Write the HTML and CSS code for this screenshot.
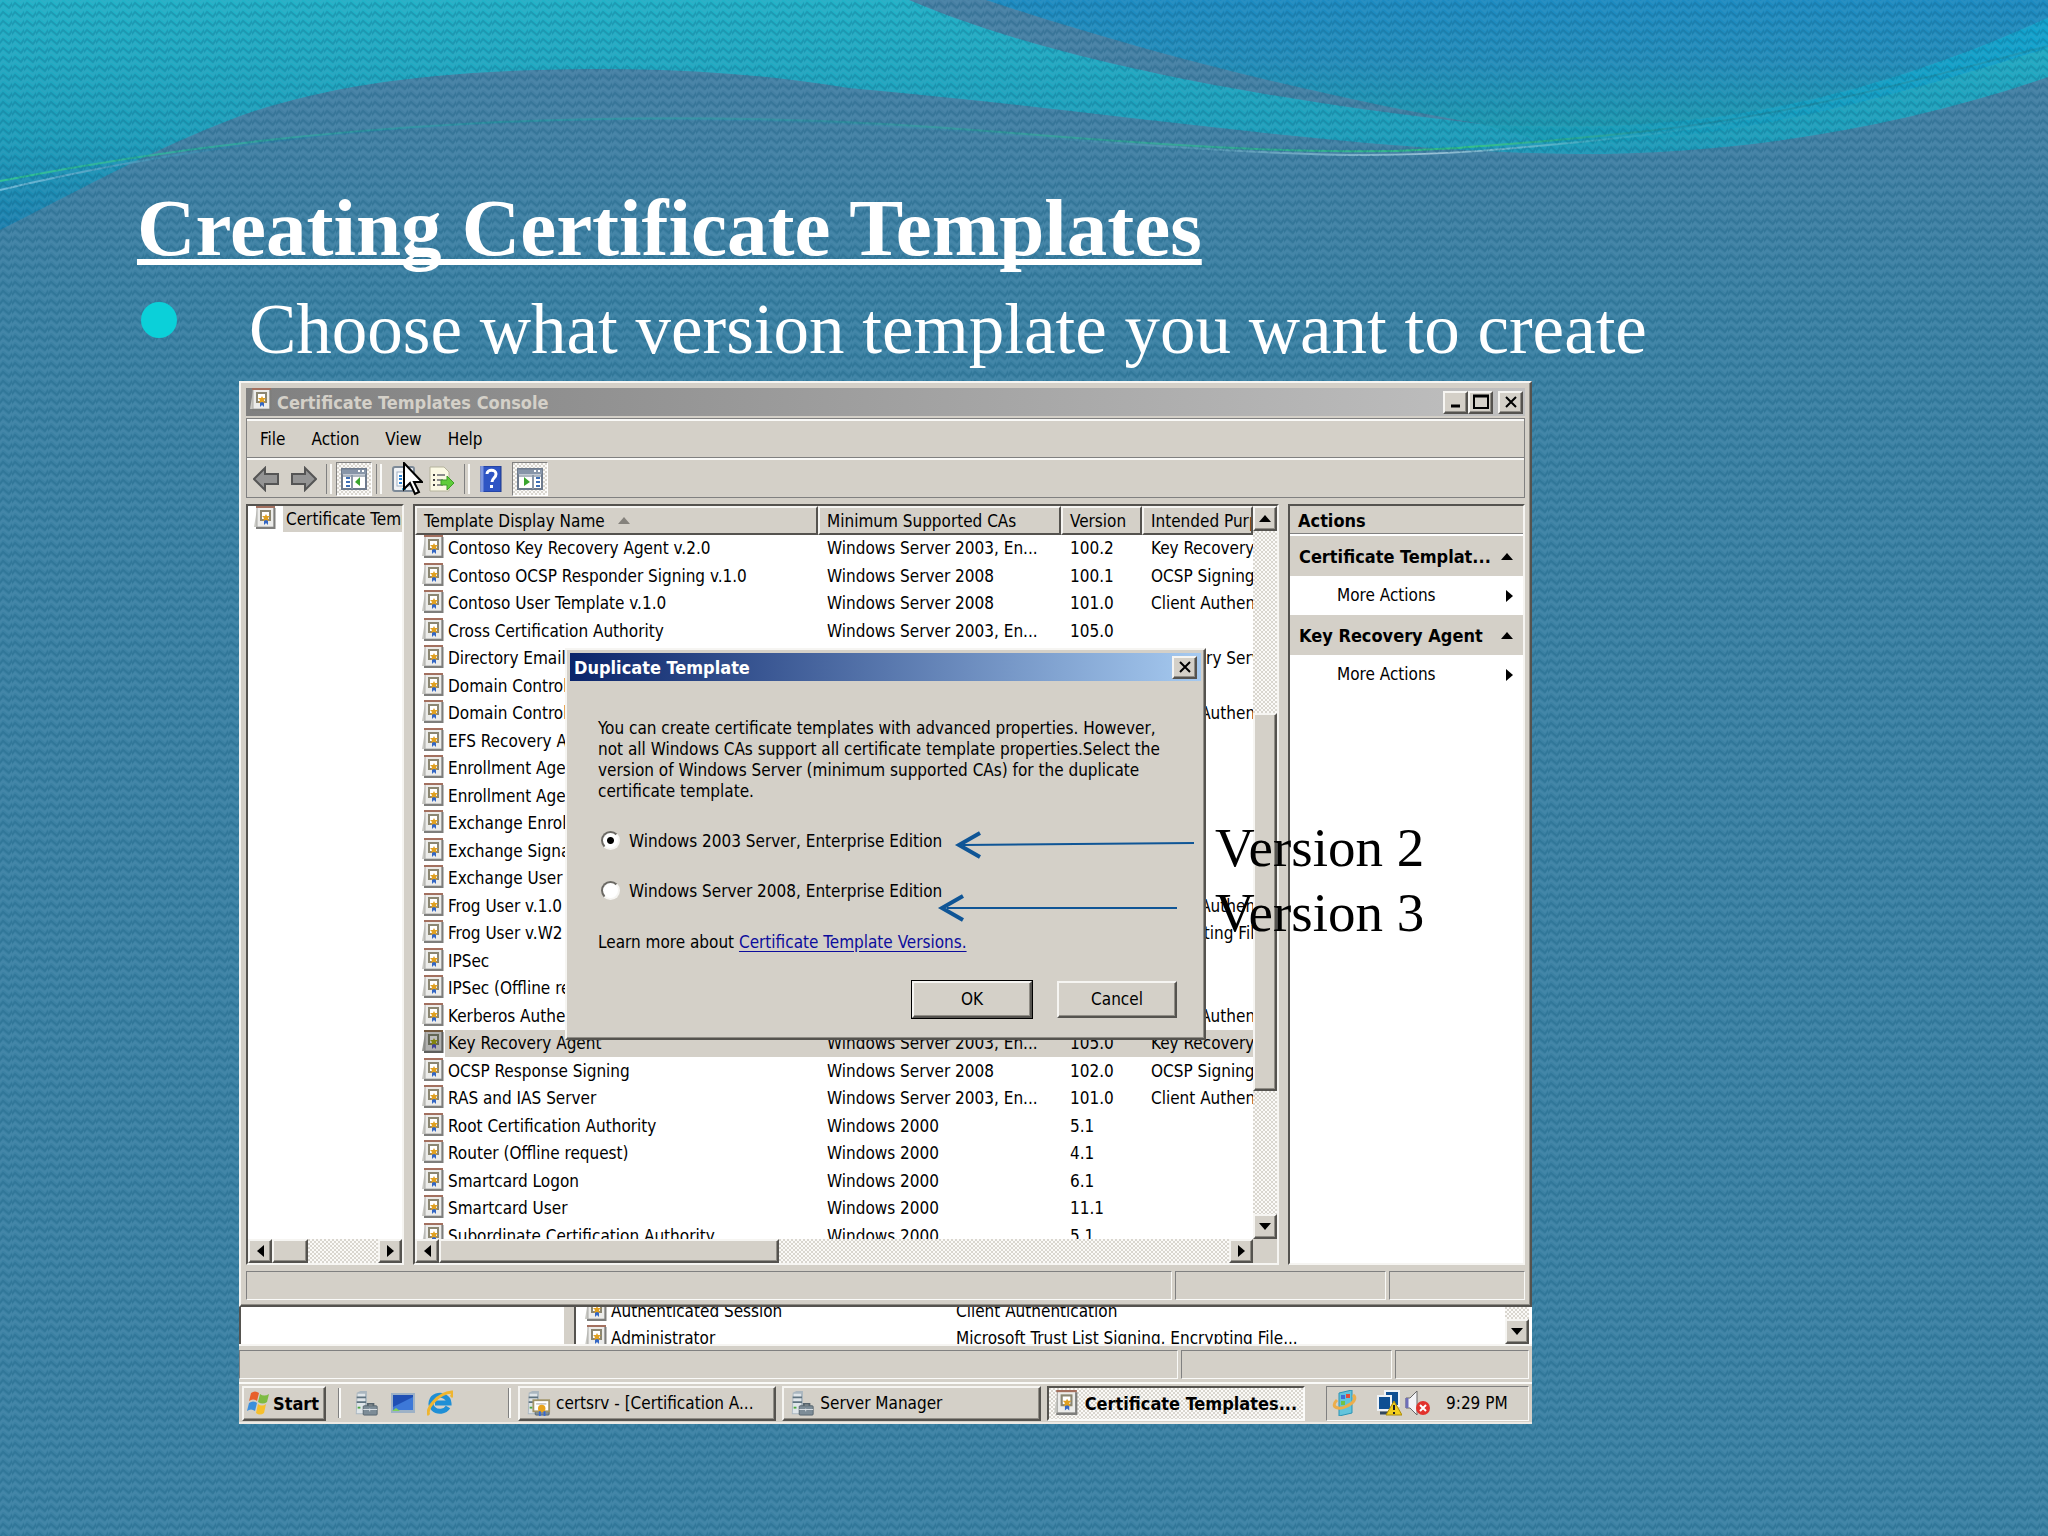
FILE: index.html
```html
<!DOCTYPE html>
<html lang="en">
<head>
<meta charset="utf-8">
<title>Creating Certificate Templates</title>
<link rel="stylesheet" href="styles.css">
</head>
<body>
<svg class="defs" aria-hidden="true">
  <symbol id="cert" viewBox="0 0 22 24">
    <path d="M3 3L0 21H4Z" fill="#c9c9c4"/>
    <rect x="3" y="1" width="17" height="20" fill="#ececea" stroke="#a9a9a6"/>
    <path d="M20.5 2V22H2" fill="none" stroke="#7e7e7c" stroke-width="2"/>
    <rect x="2" y="0" width="19" height="2" fill="#a3705f"/>
    <rect x="7" y="5" width="9" height="9" fill="#fff" stroke="#8b8672" stroke-width="2"/>
    <path d="M10 14v5l2-2 2 2v-5z" fill="#3467c4"/>
    <path d="M12 8l1 2 3 0-2 2 1 3-3-1-3 1 1-3-2-2 3 0z" fill="#e0a020"/>
  </symbol>
  <symbol id="server" viewBox="0 0 26 28">
    <path d="M3 3L7 1H14V23L11 26H2Z" fill="#aab6bf"/>
    <path d="M4 4H12V25H3Z" fill="#dfe5e9"/>
    <path d="M3 8H13M3 13H13" stroke="#5f7380" stroke-width="2"/>
    <path d="M4 19h3" stroke="#4aa83d" stroke-width="2"/>
    <path d="M15 18v-3h6v3" fill="none" stroke="#56636c" stroke-width="2"/>
    <rect x="10" y="17" width="15" height="10" rx="1" fill="#7d8c97" stroke="#55636d"/>
    <path d="M10 21H25M17 20v3" stroke="#dde3e7" stroke-width="1"/>
  </symbol>
  <symbol id="up" viewBox="0 0 12 7"><path d="M0 7L6 0L12 7Z"/></symbol>
  <symbol id="down" viewBox="0 0 12 7"><path d="M0 0H12L6 7Z"/></symbol>
  <symbol id="left" viewBox="0 0 7 12"><path d="M7 0V12L0 6Z"/></symbol>
  <symbol id="right" viewBox="0 0 7 12"><path d="M0 0V12L7 6Z"/></symbol>
  <symbol id="cross" viewBox="0 0 12 12"><path d="M1 1L11 11M11 1L1 11" stroke="#000" stroke-width="2" fill="none"/></symbol>
  <symbol id="arrow" viewBox="0 0 26 24"><path d="M1 12L12 1V7H25V17H12V23Z" fill="#949494" stroke="#555" stroke-width="2"/></symbol>
  <symbol id="console" viewBox="0 0 26 22">
    <rect x="1" y="1" width="24" height="20" fill="#fff" stroke="#6d7a8c" stroke-width="2"/>
    <path d="M1 4H25" stroke="#8795a8" stroke-width="5"/>
    <path d="M17 3h2M21 3h2" stroke="#fff" stroke-width="2"/>
    <path d="M2 8H24" stroke="#aeb6c0" stroke-width="2"/>
  </symbol>
</svg>

<main class="slide">
  <svg class="texture" aria-hidden="true">
    <defs>
      <pattern id="weave" width="12" height="9" patternUnits="userSpaceOnUse">
        <path d="M-1 8L3 3L9 8L13 2" fill="none" stroke="#14587a" stroke-opacity=".26" stroke-width="2"/>
        <path d="M-1 3L3 -2L9 3L13 -3M-1 12L3 7L9 12L13 6" fill="none" stroke="#6aa0c0" stroke-opacity=".16" stroke-width="2"/>
      </pattern>
    </defs>
    <rect width="100%" height="100%" fill="url(#weave)"/>
  </svg>
  <svg class="waves" viewBox="0 0 2048 240" preserveAspectRatio="none" aria-hidden="true">
    <defs>
      <linearGradient id="teal" x1="0" y1="0" x2="0" y2="1"><stop offset="0" stop-color="#21b3c8"/><stop offset=".6" stop-color="#1c9fbb"/><stop offset="1" stop-color="#1b7fae"/></linearGradient>
      <linearGradient id="blue" x1="0" y1="0" x2="0" y2="1"><stop offset="0" stop-color="#1c8bc2"/><stop offset=".5" stop-color="#228dba"/><stop offset="1" stop-color="#1c9ab0"/></linearGradient>
      <linearGradient id="cyan" x1="0" y1="0" x2="1" y2="0"><stop offset="0" stop-color="#179bb2"/><stop offset="1" stop-color="#10a3ce"/></linearGradient>
      <linearGradient id="green" gradientUnits="userSpaceOnUse" x1="0" y1="0" x2="2048" y2="0"><stop offset="0" stop-color="#2cc493"/><stop offset=".2" stop-color="#2a9aa0" stop-opacity=".7"/><stop offset=".4" stop-color="#2a9aa0" stop-opacity=".6"/><stop offset=".72" stop-color="#30c285"/><stop offset=".82" stop-color="#188fa8"/><stop offset="1" stop-color="#188fa8" stop-opacity=".6"/></linearGradient>
      <linearGradient id="pale" gradientUnits="userSpaceOnUse" x1="0" y1="0" x2="2048" y2="0"><stop offset="0" stop-color="#74c0dc"/><stop offset=".12" stop-color="#2a7fa6" stop-opacity=".7"/><stop offset=".5" stop-color="#3a8fae" stop-opacity=".4"/><stop offset=".7" stop-color="#9cc4d8"/><stop offset=".8" stop-color="#6fc6d4" stop-opacity=".2"/><stop offset="1" stop-color="#188fa8" stop-opacity="0"/></linearGradient>
    </defs>
    <path fill="url(#teal)" d="M0 0H909C1010 43 1180 90 1481 124C1700 130 1870 84 2048 18V77C1900 128 1740 154 1579 154C1351 152 1120 112 849 88C750 72 670 69 588 69C440 70 330 84 240 116C150 150 80 190 0 230Z"/>
    <path fill="url(#blue)" d="M986 0H2048V18C1870 98 1700 138 1481 124C1340 100 1160 58 986 0Z"/>
    <path fill="url(#cyan)" d="M1481 124C1700 138 1870 98 2048 18V48C1880 100 1760 136 1560 146Z"/>
    <path fill="none" stroke="url(#pale)" stroke-width="2" d="M0 190C300 118 640 104 1000 134S1420 158 1600 140S1900 84 2048 46"/>
    <path fill="none" stroke="url(#green)" stroke-width="2" d="M0 181C300 122 640 102 1000 132S1420 152 1600 136S1900 84 2048 46"/>
  </svg>

  <div class="copy">
    <h1>Creating Certificate Templates</h1>
    <ul><li>Choose what version template you want to create</li></ul>
  </div>

  <section class="desktop">
    <div class="window bevel">
      <header class="title inactive">
        <svg class="i22"><use href="#cert"/></svg>
        <span>Certificate Templates Console</span>
        <div class="caption">
          <button class="cap bevel" aria-label="Minimize"><svg class="i12" viewBox="0 0 12 12"><path d="M1 10H10" stroke="#000" stroke-width="3"/></svg></button>
          <button class="cap bevel" aria-label="Maximize"><svg class="i16" viewBox="0 0 16 16"><path d="M1 2H15V14H1Z" fill="none" stroke="#000" stroke-width="2"/><path d="M0 2H16" stroke="#000" stroke-width="3"/></svg></button>
          <button class="cap bevel apart" aria-label="Close"><svg class="i12"><use href="#cross"/></svg></button>
        </div>
      </header>
      <div class="bars">
        <nav class="menu"><button>File</button><button>Action</button><button>View</button><button>Help</button></nav>
        <div class="toolbar">
          <button aria-label="Back"><svg class="i26"><use href="#arrow"/></svg></button>
          <button aria-label="Forward"><svg class="i26 flip"><use href="#arrow"/></svg></button>
          <i class="sep"></i>
          <button class="pressed" aria-label="Console tree"><svg class="i26"><use href="#console"/><path d="M5 12h4M5 16h4M5 20h4" stroke="#3f6fb5" stroke-width="2"/><path d="M11 9v14" stroke="#8a97a8" stroke-width="2"/><path d="M19 11v9l-5-4z" fill="#3aa52e"/></svg></button>
          <i class="sep"></i>
          <button aria-label="Properties"><svg class="i26" viewBox="0 0 26 26"><rect x="2" y="1" width="21" height="24" rx="2" fill="#f1f3f6" stroke="#7d8a98" stroke-width="2"/><rect x="6" y="6" width="13" height="14" fill="#fff" stroke="#9fb0c4"/><path d="M8 10h3M8 13h3M8 17h3" stroke="#2b83d6" stroke-width="2"/><path d="M12 10h5M12 13h5M11 23h4" stroke="#37a9e0" stroke-width="2"/></svg></button>
          <button aria-label="Export list"><svg class="i26" viewBox="0 0 26 26"><path d="M1 1H15L20 6V25H1Z" fill="#fbf9e4" stroke="#b5b39c"/><path d="M4 9h2M4 14h2M4 19h2" stroke="#444" stroke-width="2"/><path d="M8 9h8M8 14h6M8 19h6" stroke="#8d8d8d" stroke-width="2"/><path d="M12 14h6v-4l7 7-7 7v-5h-6z" fill="#5fcc3a" stroke="#3c9c26"/></svg></button>
          <i class="sep"></i>
          <button aria-label="Help"><svg class="i26" viewBox="0 0 26 26"><rect x="2" y="0" width="20" height="26" fill="#2f55c4" stroke="#1d3789"/><path d="M3 0v26" stroke="#7e97e0" stroke-width="3"/><path d="M8 8c0-5 9-5 9 0c0 4-4 4-4 8" fill="none" stroke="#fff" stroke-width="3"/><rect x="11" y="19" width="3" height="3" fill="#fff"/></svg></button>
          <button class="pressed" aria-label="Action pane"><svg class="i26"><use href="#console"/><path d="M19 12h4M19 16h4M19 20h4" stroke="#3f6fb5" stroke-width="2"/><path d="M16 9v14" stroke="#8a97a8" stroke-width="2"/><path d="M7 11v9l6-4z" fill="#3aa52e"/></svg></button>
          <svg class="pointer" viewBox="0 0 20 34" aria-hidden="true"><path d="M1 1V27L7 21L12 32L16 30L11 20H19Z" fill="#fff" stroke="#000" stroke-width="2"/></svg>
        </div>
      </div>

      <div class="panes">
        <div class="pane tree">
          <div class="node"><svg class="i22"><use href="#cert"/></svg><span>Certificate Templates</span></div>
          <div class="hscroll"><button class="sb bevel" aria-label="Left"><svg class="tv"><use href="#left"/></svg></button><i class="thumb bevel small"></i><i class="track"></i><button class="sb bevel" aria-label="Right"><svg class="tv"><use href="#right"/></svg></button></div>
        </div>
        <div class="pane list">
          <div class="rows">
            <table>
              <colgroup><col class="c1"><col class="c2"><col class="c3"><col></colgroup>
              <thead><tr><th>Template Display Name <svg class="th sort"><use href="#up"/></svg></th><th>Minimum Supported CAs</th><th>Version</th><th>Intended Purposes</th></tr></thead>
              <tbody>
                <tr><td><svg class="i22"><use href="#cert"/></svg>Contoso Key Recovery Agent v.2.0</td><td>Windows Server 2003, En...</td><td>100.2</td><td>Key Recovery Agent</td></tr>
                <tr><td><svg class="i22"><use href="#cert"/></svg>Contoso OCSP Responder Signing v.1.0</td><td>Windows Server 2008</td><td>100.1</td><td>OCSP Signing</td></tr>
                <tr><td><svg class="i22"><use href="#cert"/></svg>Contoso User Template v.1.0</td><td>Windows Server 2008</td><td>101.0</td><td>Client Authentication</td></tr>
                <tr><td><svg class="i22"><use href="#cert"/></svg>Cross Certification Authority</td><td>Windows Server 2003, En...</td><td>105.0</td><td></td></tr>
                <tr><td><svg class="i22"><use href="#cert"/></svg>Directory Email</td><td></td><td></td><td>Directory Service</td></tr>
                <tr><td><svg class="i22"><use href="#cert"/></svg>Domain Controller</td><td></td><td></td><td></td></tr>
                <tr><td><svg class="i22"><use href="#cert"/></svg>Domain Controller</td><td></td><td></td><td>Client Authentication</td></tr>
                <tr><td><svg class="i22"><use href="#cert"/></svg>EFS Recovery Agent</td><td></td><td></td><td></td></tr>
                <tr><td><svg class="i22"><use href="#cert"/></svg>Enrollment Agent</td><td></td><td></td><td></td></tr>
                <tr><td><svg class="i22"><use href="#cert"/></svg>Enrollment Agent</td><td></td><td></td><td></td></tr>
                <tr><td><svg class="i22"><use href="#cert"/></svg>Exchange Enrollment</td><td></td><td></td><td></td></tr>
                <tr><td><svg class="i22"><use href="#cert"/></svg>Exchange Signature</td><td></td><td></td><td></td></tr>
                <tr><td><svg class="i22"><use href="#cert"/></svg>Exchange User</td><td></td><td></td><td></td></tr>
                <tr><td><svg class="i22"><use href="#cert"/></svg>Frog User v.1.0</td><td></td><td></td><td>Client Authentication</td></tr>
                <tr><td><svg class="i22"><use href="#cert"/></svg>Frog User v.W2</td><td></td><td></td><td>Encrypting File</td></tr>
                <tr><td><svg class="i22"><use href="#cert"/></svg>IPSec</td><td></td><td></td><td></td></tr>
                <tr><td><svg class="i22"><use href="#cert"/></svg>IPSec (Offline request)</td><td></td><td></td><td></td></tr>
                <tr><td><svg class="i22"><use href="#cert"/></svg>Kerberos Authentication</td><td></td><td></td><td>Client Authentication</td></tr>
                <tr class="selected"><td><svg class="i22"><use href="#cert"/></svg>Key Recovery Agent</td><td>Windows Server 2003, En...</td><td>105.0</td><td>Key Recovery Agent</td></tr>
                <tr><td><svg class="i22"><use href="#cert"/></svg>OCSP Response Signing</td><td>Windows Server 2008</td><td>102.0</td><td>OCSP Signing</td></tr>
                <tr><td><svg class="i22"><use href="#cert"/></svg>RAS and IAS Server</td><td>Windows Server 2003, En...</td><td>101.0</td><td>Client Authentication</td></tr>
                <tr><td><svg class="i22"><use href="#cert"/></svg>Root Certification Authority</td><td>Windows 2000</td><td>5.1</td><td></td></tr>
                <tr><td><svg class="i22"><use href="#cert"/></svg>Router (Offline request)</td><td>Windows 2000</td><td>4.1</td><td></td></tr>
                <tr><td><svg class="i22"><use href="#cert"/></svg>Smartcard Logon</td><td>Windows 2000</td><td>6.1</td><td></td></tr>
                <tr><td><svg class="i22"><use href="#cert"/></svg>Smartcard User</td><td>Windows 2000</td><td>11.1</td><td></td></tr>
                <tr><td><svg class="i22"><use href="#cert"/></svg>Subordinate Certification Authority</td><td>Windows 2000</td><td>5.1</td><td></td></tr>
              </tbody>
            </table>
          </div>
          <div class="vscroll"><button class="sb bevel" aria-label="Up"><svg class="th"><use href="#up"/></svg></button><i class="track before"></i><i class="thumb bevel tall"></i><i class="track after"></i><button class="sb bevel" aria-label="Down"><svg class="th"><use href="#down"/></svg></button></div>
          <div class="hscroll"><button class="sb bevel" aria-label="Left"><svg class="tv"><use href="#left"/></svg></button><i class="thumb bevel long"></i><i class="track"></i><button class="sb bevel" aria-label="Right"><svg class="tv"><use href="#right"/></svg></button></div>
          <i class="corner"></i>
        </div>
        <aside class="pane actions">
          <h2>Actions</h2>
          <h3><span>Certificate Templat...</span><svg class="th"><use href="#up"/></svg></h3>
          <button>More Actions<svg class="tv"><use href="#right"/></svg></button>
          <h3><span>Key Recovery Agent</span><svg class="th"><use href="#up"/></svg></h3>
          <button>More Actions<svg class="tv"><use href="#right"/></svg></button>
        </aside>
      </div>
      <footer class="status"><i></i><i></i><i></i></footer>
    </div>

    <div class="under">
      <div class="under-tree"></div>
      <div class="under-list">
        <div><svg class="i22"><use href="#cert"/></svg><span>Authenticated Session</span><span>Client Authentication</span></div>
        <div><svg class="i22"><use href="#cert"/></svg><span>Administrator</span><span>Microsoft Trust List Signing, Encrypting File...</span></div>
      </div>
      <div class="under-scroll"><i class="track"></i><button class="sb bevel" aria-label="Down"><svg class="th"><use href="#down"/></svg></button></div>
    </div>
    <div class="status lower"><i></i><i></i><i></i></div>

    <footer class="taskbar">
      <button class="start bevel"><svg class="i26" viewBox="0 0 26 26"><path d="M5 3q4-3 8 0l-2 8q-4-3-8 0z" fill="#e8602c"/><path d="M14 4q4 3 9 0l-2 8q-4 3-9 0z" fill="#7dbb42"/><path d="M3 13q4-3 8 0l-2 8q-4-3-8 0z" fill="#3c8fdc"/><path d="M12 14q4 3 8 0l-2 9q-4 3-8 0z" fill="#f6bf2c"/></svg>Start</button>
      <i class="grip"></i>
      <div class="quick">
        <svg class="i26"><use href="#server"/></svg>
        <svg class="i26" viewBox="0 0 26 26"><rect x="1" y="3" width="24" height="20" fill="#9db1c6"/><rect x="3" y="5" width="20" height="15" fill="#1f4fb4"/><path d="M3 17L23 7V20H3Z" fill="#3d78d8"/><path d="M2 21l4-3 4 3z" fill="#7fd05a"/></svg>
        <svg class="i26" viewBox="0 0 26 26"><path d="M21 17a9 8 0 1 1 1-4H8" fill="none" stroke="#1f8fd6" stroke-width="5"/><path d="M2 25C-2 20 10 3 25 2c1 2 0 4-1 5" fill="none" stroke="#efb52f" stroke-width="3"/></svg>
      </div>
      <i class="grip"></i>
      <div class="tasks">
        <button class="bevel"><svg class="i26" viewBox="0 0 26 28"><use href="#server" width="26" height="28"/><rect x="8" y="11" width="17" height="12" fill="#fff" stroke="#a09468" stroke-width="2"/><path d="M11 15h11" stroke="#999"/><circle cx="17" cy="20" r="4" fill="#e9a41d"/><path d="M15 23v5M20 23v5" stroke="#3568d4" stroke-width="2"/></svg>certsrv - [Certification A...</button>
        <button class="bevel"><svg class="i26"><use href="#server"/></svg>Server Manager</button>
        <button class="active"><svg class="i24"><use href="#cert"/></svg>Certificate Templates...</button>
      </div>
      <div class="tray">
        <svg class="i26" viewBox="0 0 26 26"><path d="M7 3L20 0V23L7 26Z" fill="#62c4dc" stroke="#2c93b4"/><rect x="9" y="5" width="4" height="4" fill="#3d6fd8"/><rect x="14" y="4" width="4" height="4" fill="#e24d3a"/><rect x="9" y="11" width="4" height="4" fill="#6fc349"/><path d="M5 10C-3 18 8 20 15 16C22 13 25 8 21 5" fill="none" stroke="#ecae4c" stroke-width="3"/></svg>
        <svg class="i26 net" viewBox="0 0 26 26"><rect x="9" y="1" width="14" height="15" fill="#0d4f93" stroke="#eef2f6" stroke-width="2"/><rect x="2" y="6" width="13" height="14" fill="#0d4f93" stroke="#eef2f6" stroke-width="2"/><path d="M4 23h10" stroke="#33475c" stroke-width="3"/><path d="M18 11L26 25H10Z" fill="#f3cf1c" stroke="#ab8b0b"/><path d="M18 15v5M18 22v2" stroke="#222" stroke-width="2"/></svg>
        <svg class="i26" viewBox="0 0 26 26"><path d="M1 8H5L12 1V25L5 18H1Z" fill="#f3f3f6" stroke="#666" stroke-width="1"/><path d="M2 8v10" stroke="#6e6eb8" stroke-width="3"/><circle cx="18" cy="18" r="7" fill="#e2322c"/><path d="M15 15l6 6M21 15l-6 6" stroke="#fff" stroke-width="2"/></svg>
        <time>9:29 PM</time>
      </div>
    </footer>

    <form class="dialog bevel">
      <header class="title"><span>Duplicate Template</span><button type="button" class="cap bevel" aria-label="Close"><svg class="i12"><use href="#cross"/></svg></button></header>
      <div class="dialog-body">
        <p>You can create certificate templates with advanced properties. However,<br>not all Windows CAs support all certificate template properties.Select the<br>version of Windows Server (minimum supported CAs) for the duplicate<br>certificate template.</p>
        <label><input type="radio" name="edition" checked>Windows 2003 Server, Enterprise Edition</label>
        <label><input type="radio" name="edition">Windows Server 2008, Enterprise Edition</label>
        <p>Learn more about <a href="#versions">Certificate Template Versions.</a></p>
        <div class="buttons"><button type="button" class="bevel default">OK</button><button type="button" class="bevel">Cancel</button></div>
      </div>
    </form>

    <svg class="callouts" viewBox="0 0 256 80" aria-hidden="true">
      <path d="M24 14L255 12M8 77H238" fill="none" stroke="#0f5596" stroke-width="2"/>
      <path d="M41 2L20 14L41 26M24 65L3 77L24 89" fill="none" stroke="#0f5596" stroke-width="4"/>
    </svg>
    <div class="versions"><p>Version 2</p><p>Version 3</p></div>
  </section>
</main>
</body>
</html>
```
FILE: styles.css
```css
* { box-sizing: border-box; }

body {
  margin: 0;
  font-family: "DejaVu Sans Condensed", "DejaVu Sans", "Noto Sans", sans-serif;
  font-size: 17px;
  line-height: 21px;
  color: #000;
}

button {
  font: inherit;
  color: inherit;
  padding: 0;
  border: 0;
  background: none;
}

h1, h2, h3, p, ul { margin: 0; padding: 0; }
.defs { position: absolute; width: 0; height: 0; }

/* slide */
.slide {
  position: relative;
  min-height: 100vh;
  padding: 183px 0 100px;
  overflow: hidden;
  isolation: isolate;
  background: linear-gradient(#487fa3, #3b81a3 20%, #3b81a3);
}

.texture, .waves { position: absolute; left: 0; top: 0; width: 100%; }
.texture { height: 100%; z-index: -1; }
.waves { height: 240px; z-index: -2; }

.copy {
  margin-bottom: 12px;
  padding-left: 137px;
  color: #fff;
  font-family: "Liberation Serif", "Times New Roman", serif;
}

h1 {
  font-size: 81px;
  line-height: 90px;
  margin-bottom: 16px;
  text-decoration: underline;
  text-decoration-thickness: 6px;
  text-underline-offset: 4px;
  text-decoration-skip-ink: none;
}

.copy ul { list-style: none; }

.copy li {
  display: flex;
  gap: 72px;
  padding-left: 4px;
  font-size: 71px;
  line-height: 80px;
}

.copy li::before {
  content: "";
  flex: none;
  width: 36px;
  height: 36px;
  margin-top: 13px;
  border-radius: 50%;
  background: #0bd0d9;
}

/* shared parts */
.bevel {
  background: #d4d0c8;
  border: 2px solid;
  border-color: #f6f5f2 #55534f #55534f #f6f5f2;
  box-shadow: inset -1px -1px #908d86;
}

.i12 { width: 12px; height: 12px; }
.i16 { width: 16px; height: 16px; }
.i22 { width: 22px; height: 24px; }
.i24 { width: 24px; height: 26px; }
.i26 { width: 26px; height: 26px; }
.th { width: 12px; height: 7px; }
.tv { width: 7px; height: 12px; }
svg { display: block; flex: none; }

.track, .pressed, .tasks .active {
  background: repeating-conic-gradient(#fbfaf8 0 25%, #d9d6cf 0 50%) 0 0 / 4px 4px;
}

/* desktop capture */
.desktop { position: relative; margin: 0 516px 0 239px; background: #d4d0c8; }
.window { padding: 5px; }

.title {
  display: flex;
  align-items: center;
  height: 28px;
  padding: 0 4px;
  font-size: 18px;
  font-weight: bold;
  color: #fff;
  background: linear-gradient(90deg, #0a246a, #a6caf0);
}

.title.inactive {
  gap: 5px;
  color: #d4d0c8;
  padding: 0 2px 0 4px;
  background: linear-gradient(90deg, #808080, #c0c0c0);
}

.title .i22 { margin-bottom: 4px; }
.caption { display: flex; margin-left: auto; }
.cap { display: grid; place-items: center; width: 25px; height: 23px; }
.cap.apart { margin-left: 5px; }

.bars { margin-top: 2px; border: 1px solid #808080; }

.menu {
  display: flex;
  gap: 26px;
  height: 39px;
  padding: 1px 13px 0;
  border-top: 2px solid #fafaf8;
  border-bottom: 1px solid #808080;
}

.toolbar {
  position: relative;
  display: flex;
  align-items: center;
  gap: 2px;
  height: 39px;
  padding-left: 1px;
  border-top: 2px solid #fafaf8;
}

.toolbar button { display: grid; place-items: center; width: 36px; height: 34px; }
.toolbar .pressed { border: 1px solid; border-color: #808080 #fff #fff #808080; }
.flip { transform: scaleX(-1); }

.sep { width: 10px; height: 30px; }
.sep::after, .grip {
  content: "";
  display: block;
  width: 3px;
  height: 30px;
  margin: 0 auto;
  border-left: 1px solid #808080;
  border-right: 2px solid #fafaf8;
}

.pointer { position: absolute; left: 156px; top: 2px; width: 20px; height: 34px; }

/* panes */
.panes {
  display: grid;
  grid-template-columns: 158px minmax(0, 1fr) 237px;
  gap: 9px;
  height: 761px;
  margin-top: 6px;
}

.pane {
  background: #fff;
  border: 2px solid;
  border-color: #55534f #f6f5f2 #f6f5f2 #55534f;
  overflow: hidden;
  min-width: 0;
}

.tree { display: flex; flex-direction: column; justify-content: space-between; }
.node { display: flex; gap: 7px; height: 26px; padding-left: 6px; white-space: nowrap; }
.node span { padding: 1px 3px 0; background: #d4d0c8; line-height: 24px; }

.list { display: grid; grid-template: minmax(0, 1fr) 24px / minmax(0, 1fr) 24px; }
.rows { overflow: hidden; }
.corner { background: #d4d0c8; }

.hscroll, .vscroll { display: flex; height: 24px; }
.vscroll { flex-direction: column; height: auto; }
.sb { display: grid; place-items: center; flex: none; width: 24px; height: 25px; }
.hscroll .sb { height: 24px; }
.track { flex: 1; }
.thumb.small { flex: 0 0 36px; }
.thumb.long { flex: 0 1 340px; }
.track.before { flex: 183; }
.thumb.tall { flex: 376; }
.track.after { flex: 124; }

table { width: 100%; table-layout: fixed; border-collapse: separate; border-spacing: 0; }
.c1 { width: 403px; }
.c2 { width: 243px; }
.c3 { width: 81px; }

th {
  height: 29px;
  padding: 1px 7px 0;
  font-weight: normal;
  text-align: left;
  white-space: nowrap;
  overflow: hidden;
  line-height: 24px;
  background: #d4d0c8;
  border: 2px solid;
  border-color: #f6f5f2 #55534f #55534f #f6f5f2;
}

th:nth-child(n+3) { padding-right: 0; }
th .sort { display: inline-block; margin-left: 8px; vertical-align: 3px; fill: #85827c; }

td { height: 27px; padding: 0 9px; white-space: nowrap; overflow: hidden; line-height: 27px; }
tr:nth-child(even) td { height: 28px; }
td:first-child { padding-left: 7px; }
td .i22 { float: left; margin-right: 4px; }
.selected td { background: #d4d0c8; }
.selected td:first-child { background: linear-gradient(90deg, #fff 30px, #d4d0c8 30px); }
.selected .i22 { filter: brightness(.75) hue-rotate(20deg); }

.actions h2, .actions h3 {
  display: flex;
  align-items: center;
  justify-content: space-between;
  height: 40px;
  padding: 0 10px 0 9px;
  font-size: 18px;
  background: #d4d0c8;
}

.actions h2 {
  height: 28px;
  padding: 1px 8px 0;
  margin-bottom: 2px;
  border-bottom: 1px solid #808080;
}

.actions button {
  display: flex;
  align-items: center;
  justify-content: space-between;
  width: 100%;
  height: 39px;
  padding: 0 10px 0 47px;
}

.status {
  display: grid;
  grid-template-columns: minmax(0, 1fr) 211px 136px;
  gap: 3px;
  height: 29px;
  margin-top: 6px;
}

.status i { border: 1px solid; border-color: #808080 #fafaf8 #fafaf8 #808080; }

/* window behind */
.under {
  display: grid;
  grid-template-columns: 327px minmax(0, 1fr) 24px;
  height: 39px;
  padding-right: 3px;
  background: #fff;
  border-bottom: 2px solid #f6f5f2;
  overflow: hidden;
}

.under-tree { border: solid; border-width: 0 2px; border-color: #d4d0c8 #d4d0c8 #d4d0c8 #55534f; }
.under-list { border-left: 8px solid #d4d0c8; overflow: hidden; padding-left: 11px; margin-top: -9px; box-shadow: inset 2px 0 #55534f; }
.under-list div { display: grid; grid-template-columns: 22px 341px 1fr; gap: 4px; height: 27px; line-height: 27px; white-space: nowrap; }
.under-scroll { display: flex; flex-direction: column; }
.lower { margin: 4px 3px 0 0; }
.lower { grid-template-columns: minmax(0, 1fr) 211px 134px; }

/* taskbar */
.taskbar {
  display: flex;
  align-items: center;
  height: 42px;
  margin-top: 3px;
  padding: 0 3px;
  border-top: 2px solid #fafaf8;
  border-bottom: 2px solid #ebe9e4;
}

.start {
  display: flex;
  align-items: center;
  gap: 1px;
  width: 84px;
  height: 35px;
  padding-left: 2px;
  font-size: 18px;
  font-weight: bold;
}

.grip { margin: 0 12px; }
.quick { display: flex; gap: 11px; width: 143px; }
.grip + .tasks { margin-left: -5px; }
.tasks { display: flex; flex: 1; gap: 6px; min-width: 0; }

.tasks button {
  display: flex;
  flex: 1 1 0;
  align-items: center;
  gap: 5px;
  min-width: 0;
  height: 35px;
  padding-left: 5px;
  white-space: nowrap;
  overflow: hidden;
}

.tasks .active {
  gap: 7px;
  font-weight: bold;
  font-size: 18px;
  border: 2px solid;
  border-color: #55534f #fafaf8 #fafaf8 #55534f;
}

.tray {
  display: flex;
  align-items: center;
  width: 203px;
  height: 35px;
  margin-left: 21px;
  padding-left: 5px;
  border: 1px solid;
  border-color: #808080 #fafaf8 #fafaf8 #808080;
}

.net { margin-left: 18px; margin-right: 3px; }
.tray time { margin-left: 15px; }

/* dialog floating over the console */
.dialog {
  position: absolute;
  left: 326px;
  top: 267px;
  width: 641px;
  height: 392px;
  padding: 3px;
}

.dialog .title { justify-content: space-between; }
.dialog-body { padding: 37px 24px 0 28px; }
.dialog-body p { white-space: nowrap; }
.dialog-body label { display: flex; align-items: center; gap: 9px; height: 21px; margin-top: 29px; }
.dialog-body label + p { margin-top: 30px; }

.dialog input {
  appearance: none;
  width: 19px;
  height: 19px;
  margin: 0 0 2px 3px;
  border: 2px solid;
  border-color: #6b6964 #f6f5f2 #f6f5f2 #6b6964;
  border-radius: 50%;
  background: #fff;
}

.dialog input:checked { background: radial-gradient(circle, #000 3px, #fff 4px); }
.dialog a { color: #0c0c9c; text-underline-offset: 3px; }
.buttons { display: flex; justify-content: flex-end; gap: 25px; margin-top: 28px; }
.buttons button { width: 120px; height: 37px; }
.buttons .default { outline: 1px solid #000; }

/* slide annotations */
.callouts { position: absolute; left: 700px; top: 450px; width: 256px; height: 80px; overflow: visible; }

.versions {
  position: absolute;
  left: 976px;
  top: 434px;
  font-family: "Liberation Serif", "Times New Roman", serif;
  font-size: 55px;
  line-height: 65px;
}
```
